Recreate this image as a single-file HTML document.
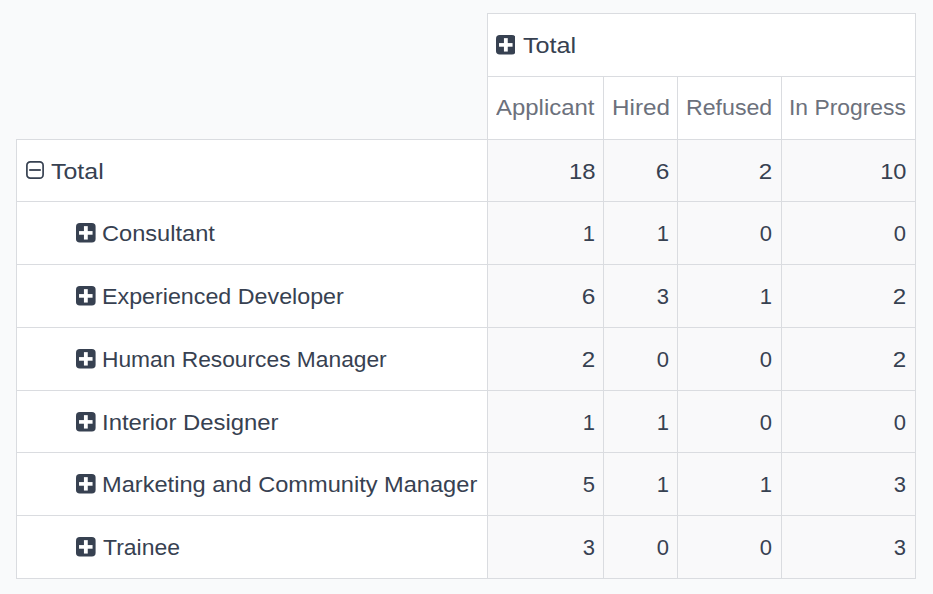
<!DOCTYPE html>
<html><head><meta charset="utf-8"><style>
html,body{margin:0;padding:0}
body{width:933px;height:594px;overflow:hidden;position:relative;background:#f9fafb;font-family:"Liberation Sans",sans-serif}
body>div{position:absolute}
.t{font-size:22px;line-height:normal;white-space:pre}
</style></head><body>
<div style="left:487px;top:13px;width:429px;height:126px;background:#fff"></div>
<div style="left:16px;top:139px;width:471px;height:439px;background:#fff"></div>
<div style="left:487px;top:139px;width:429px;height:439px;background:#f9f9fa"></div>
<svg style="position:absolute;left:495.9px;top:35px" width="19.6" height="19.6" viewBox="0 0 20 20"><rect x="0" y="0" width="20" height="20" rx="3.8" fill="#374151"/><rect x="3.1" y="8.25" width="13.8" height="3.7" fill="#fff"/><rect x="8.1" y="3.2" width="3.9" height="13.7" fill="#fff"/></svg>
<div class="t" style="left:522.5px;top:32.59px;color:#374151;transform:scaleX(1.1444);transform-origin:0 0">Total</div>
<div class="t" style="left:496px;top:94.59px;color:#6c717c;transform:scaleX(1.0878);transform-origin:0 0">Applicant</div>
<div class="t" style="left:611.5px;top:94.59px;color:#6c717c;transform:scaleX(1.102);transform-origin:0 0">Hired</div>
<div class="t" style="left:686px;top:94.59px;color:#6c717c;transform:scaleX(1.0519);transform-origin:0 0">Refused</div>
<div class="t" style="left:789px;top:94.59px;color:#6c717c;transform:scaleX(1.0391);transform-origin:0 0">In Progress</div>
<svg style="position:absolute;left:26px;top:161px" width="18" height="18" viewBox="0 0 18 18"><rect x="0.9" y="0.9" width="16.2" height="16.2" rx="3.4" fill="none" stroke="#374151" stroke-width="1.7"/><rect x="3.2" y="8.1" width="11.6" height="1.8" fill="#374151"/></svg>
<div class="t" style="left:51px;top:158.59px;color:#374151;transform:scaleX(1.1333);transform-origin:0 0">Total</div>
<svg style="position:absolute;left:76px;top:223px" width="19.6" height="19.6" viewBox="0 0 20 20"><rect x="0" y="0" width="20" height="20" rx="3.8" fill="#374151"/><rect x="3.1" y="8.25" width="13.8" height="3.7" fill="#fff"/><rect x="8.1" y="3.2" width="3.9" height="13.7" fill="#fff"/></svg>
<div class="t" style="left:102px;top:220.59px;color:#374151;transform:scaleX(1.0733);transform-origin:0 0">Consultant</div>
<svg style="position:absolute;left:76px;top:286px" width="19.6" height="19.6" viewBox="0 0 20 20"><rect x="0" y="0" width="20" height="20" rx="3.8" fill="#374151"/><rect x="3.1" y="8.25" width="13.8" height="3.7" fill="#fff"/><rect x="8.1" y="3.2" width="3.9" height="13.7" fill="#fff"/></svg>
<div class="t" style="left:102px;top:283.59px;color:#374151;transform:scaleX(1.0573);transform-origin:0 0">Experienced Developer</div>
<svg style="position:absolute;left:76px;top:349px" width="19.6" height="19.6" viewBox="0 0 20 20"><rect x="0" y="0" width="20" height="20" rx="3.8" fill="#374151"/><rect x="3.1" y="8.25" width="13.8" height="3.7" fill="#fff"/><rect x="8.1" y="3.2" width="3.9" height="13.7" fill="#fff"/></svg>
<div class="t" style="left:102px;top:346.59px;color:#374151;transform:scaleX(1.0348);transform-origin:0 0">Human Resources Manager</div>
<svg style="position:absolute;left:76px;top:412px" width="19.6" height="19.6" viewBox="0 0 20 20"><rect x="0" y="0" width="20" height="20" rx="3.8" fill="#374151"/><rect x="3.1" y="8.25" width="13.8" height="3.7" fill="#fff"/><rect x="8.1" y="3.2" width="3.9" height="13.7" fill="#fff"/></svg>
<div class="t" style="left:102px;top:409.59px;color:#374151;transform:scaleX(1.0857);transform-origin:0 0">Interior Designer</div>
<svg style="position:absolute;left:76px;top:474px" width="19.6" height="19.6" viewBox="0 0 20 20"><rect x="0" y="0" width="20" height="20" rx="3.8" fill="#374151"/><rect x="3.1" y="8.25" width="13.8" height="3.7" fill="#fff"/><rect x="8.1" y="3.2" width="3.9" height="13.7" fill="#fff"/></svg>
<div class="t" style="left:102px;top:471.59px;color:#374151;transform:scaleX(1.073);transform-origin:0 0">Marketing and Community Manager</div>
<svg style="position:absolute;left:76px;top:537px" width="19.6" height="19.6" viewBox="0 0 20 20"><rect x="0" y="0" width="20" height="20" rx="3.8" fill="#374151"/><rect x="3.1" y="8.25" width="13.8" height="3.7" fill="#fff"/><rect x="8.1" y="3.2" width="3.9" height="13.7" fill="#fff"/></svg>
<div class="t" style="left:103px;top:534.59px;color:#374151;transform:scaleX(1.0431);transform-origin:0 0">Trainee</div>
<div class="t" style="right:338px;top:158.59px;color:#374151;transform:scaleX(1.0864);transform-origin:100% 0">18</div>
<div class="t" style="right:264px;top:158.59px;color:#374151;transform:scaleX(1.11);transform-origin:100% 0">6</div>
<div class="t" style="right:161px;top:158.59px;color:#374151;transform:scaleX(1.1);transform-origin:100% 0">2</div>
<div class="t" style="right:27px;top:158.59px;color:#374151;transform:scaleX(1.0727);transform-origin:100% 0">10</div>
<div class="t" style="right:338px;top:220.59px;color:#374151;transform:scaleX(1.0);transform-origin:100% 0">1</div>
<div class="t" style="right:264px;top:220.59px;color:#374151;transform:scaleX(1.0);transform-origin:100% 0">1</div>
<div class="t" style="right:161px;top:220.59px;color:#374151;transform:scaleX(1.0);transform-origin:100% 0">0</div>
<div class="t" style="right:27px;top:220.59px;color:#374151;transform:scaleX(1.0);transform-origin:100% 0">0</div>
<div class="t" style="right:338px;top:283.59px;color:#374151;transform:scaleX(1.11);transform-origin:100% 0">6</div>
<div class="t" style="right:264px;top:283.59px;color:#374151;transform:scaleX(1.0);transform-origin:100% 0">3</div>
<div class="t" style="right:161px;top:283.59px;color:#374151;transform:scaleX(1.0);transform-origin:100% 0">1</div>
<div class="t" style="right:27px;top:283.59px;color:#374151;transform:scaleX(1.1);transform-origin:100% 0">2</div>
<div class="t" style="right:338px;top:346.59px;color:#374151;transform:scaleX(1.1);transform-origin:100% 0">2</div>
<div class="t" style="right:264px;top:346.59px;color:#374151;transform:scaleX(1.0);transform-origin:100% 0">0</div>
<div class="t" style="right:161px;top:346.59px;color:#374151;transform:scaleX(1.0);transform-origin:100% 0">0</div>
<div class="t" style="right:27px;top:346.59px;color:#374151;transform:scaleX(1.1);transform-origin:100% 0">2</div>
<div class="t" style="right:338px;top:409.59px;color:#374151;transform:scaleX(1.0);transform-origin:100% 0">1</div>
<div class="t" style="right:264px;top:409.59px;color:#374151;transform:scaleX(1.0);transform-origin:100% 0">1</div>
<div class="t" style="right:161px;top:409.59px;color:#374151;transform:scaleX(1.0);transform-origin:100% 0">0</div>
<div class="t" style="right:27px;top:409.59px;color:#374151;transform:scaleX(1.0);transform-origin:100% 0">0</div>
<div class="t" style="right:338px;top:471.59px;color:#374151;transform:scaleX(1.0);transform-origin:100% 0">5</div>
<div class="t" style="right:264px;top:471.59px;color:#374151;transform:scaleX(1.0);transform-origin:100% 0">1</div>
<div class="t" style="right:161px;top:471.59px;color:#374151;transform:scaleX(1.0);transform-origin:100% 0">1</div>
<div class="t" style="right:27px;top:471.59px;color:#374151;transform:scaleX(1.0);transform-origin:100% 0">3</div>
<div class="t" style="right:338px;top:534.59px;color:#374151;transform:scaleX(1.0);transform-origin:100% 0">3</div>
<div class="t" style="right:264px;top:534.59px;color:#374151;transform:scaleX(1.0);transform-origin:100% 0">0</div>
<div class="t" style="right:161px;top:534.59px;color:#374151;transform:scaleX(1.0);transform-origin:100% 0">0</div>
<div class="t" style="right:27px;top:534.59px;color:#374151;transform:scaleX(1.0);transform-origin:100% 0">3</div>
<div style="left:487px;top:13px;width:429px;height:1px;background:#dadce0"></div>
<div style="left:487px;top:76px;width:429px;height:1px;background:#dadce0"></div>
<div style="left:16px;top:139px;width:900px;height:1px;background:#dadce0"></div>
<div style="left:16px;top:201px;width:900px;height:1px;background:#dadce0"></div>
<div style="left:16px;top:264px;width:900px;height:1px;background:#dadce0"></div>
<div style="left:16px;top:327px;width:900px;height:1px;background:#dadce0"></div>
<div style="left:16px;top:390px;width:900px;height:1px;background:#dadce0"></div>
<div style="left:16px;top:452px;width:900px;height:1px;background:#dadce0"></div>
<div style="left:16px;top:515px;width:900px;height:1px;background:#dadce0"></div>
<div style="left:16px;top:578px;width:900px;height:1px;background:#dadce0"></div>
<div style="left:16px;top:139px;width:1px;height:440px;background:#dadce0"></div>
<div style="left:487px;top:13px;width:1px;height:566px;background:#dadce0"></div>
<div style="left:915px;top:13px;width:1px;height:566px;background:#dadce0"></div>
<div style="left:603px;top:76px;width:1px;height:503px;background:#dadce0"></div>
<div style="left:677px;top:76px;width:1px;height:503px;background:#dadce0"></div>
<div style="left:781px;top:76px;width:1px;height:503px;background:#dadce0"></div>
</body></html>
